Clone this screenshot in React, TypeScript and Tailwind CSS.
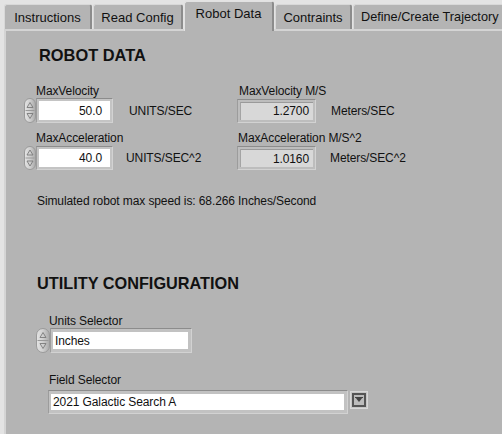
import React from "react";

function Tab({ w, label, active, last }: { w: number; label: string; active?: boolean; last?: boolean }) {
  if (active) {
    return (
      <div
        style={{ width: w }}
        className="relative z-10 mb-[-2px] h-[30px] shrink-0 rounded-t-[3px] border-t border-l border-r-2 border-t-[#e2e2e2] border-l-[#e2e2e2] border-r-[#8c8c8c] bg-[#b4b4b4] flex justify-center pt-[4px] text-[13px] leading-[15px]"
      >
        {label}
      </div>
    );
  }
  return (
    <div
      style={{ width: w }}
      className={`h-[25px] shrink-0 rounded-t-[3px] border-t border-l border-r-2 border-t-[#d8d8d8] border-l-[#d8d8d8] border-r-[#8c8c8c] bg-[#b4b4b4] flex items-center leading-[15px] whitespace-nowrap ${last ? "justify-start pl-[7px] text-[12.7px]" : "justify-center text-[13px]"}`}
    >
      {label}
    </div>
  );
}

function Spinner({ w = 13, h = 25 }: { w?: number; h?: number }) {
  const mid = h / 2;
  return (
    <svg width={w} height={h} viewBox={`0 0 ${w} ${h}`} className="shrink-0">
      <defs>
        <linearGradient id="spg" x1="0" x2="1" y1="0" y2="0">
          <stop offset="0" stopColor="#e4e4e4" />
          <stop offset="0.5" stopColor="#cfcfcf" />
          <stop offset="1" stopColor="#a9a9a9" />
        </linearGradient>
      </defs>
      <rect x="0.5" y="0.5" width={w - 1} height={h - 1} rx={(w - 1) / 2} fill="url(#spg)" stroke="#9a9a9a" />
      <line x1="1.5" y1={mid} x2={w - 1.5} y2={mid} stroke="#9a9a9a" />
      <path d={`M${w / 2} ${mid - 8} L${w / 2 + 3} ${mid - 3} L${w / 2 - 3} ${mid - 3} Z`} fill="none" stroke="#7a7a7a" strokeWidth="0.9" />
      <path d={`M${w / 2} ${mid + 8} L${w / 2 + 3} ${mid + 3} L${w / 2 - 3} ${mid + 3} Z`} fill="none" stroke="#7a7a7a" strokeWidth="0.9" />
    </svg>
  );
}

function NumControl({ value, w, h }: { value: string; w: number; h: number }) {
  return (
    <div
      style={{ width: w, height: h }}
      className="shrink-0 border border-t-[#8c8c8c] border-l-[#9c9c9c] border-r-[#d2d2d2] border-b-[#d2d2d2] bg-[#c4c4c4] p-[2px]"
    >
      <div className="h-full bg-white flex items-center justify-end pr-[8px] text-[12px] leading-[14px]">{value}</div>
    </div>
  );
}

function NumIndicator({ value, w, h }: { value: string; w: number; h: number }) {
  return (
    <div
      style={{ width: w, height: h }}
      className="shrink-0 border border-t-[#8c8c8c] border-l-[#9c9c9c] border-r-[#d2d2d2] border-b-[#d2d2d2] bg-[#bdbdbd] p-[2px]"
    >
      <div className="h-full bg-[#d8d8d8] border-t border-l border-t-[#9a9a9a] border-l-[#a4a4a4] flex items-center justify-end pr-[4px] text-[12px] leading-[14px]">
        {value}
      </div>
    </div>
  );
}

function TextBox({ value, w, h }: { value: string; w: number; h: number }) {
  return (
    <div
      style={{ width: w, height: h }}
      className="shrink-0 border border-t-[#8c8c8c] border-l-[#9c9c9c] border-r-[#d2d2d2] border-b-[#d2d2d2] bg-[#c2c2c2] pt-[3px] pl-[2px] pr-[3px] pb-[3px]"
    >
      <div className="h-full bg-white flex items-center pl-[2px] text-[12px] leading-[14px]">{value}</div>
    </div>
  );
}

function DropButton() {
  return (
    <div className="w-[18px] h-[18px] bg-[#c6c6c6] border border-[#d8d8d8] flex items-center justify-center">
      <div className="w-[14px] h-[14px] border-2 border-[#555555] bg-[#bcbcbc] flex items-center justify-center">
        <svg width="8" height="6" viewBox="0 0 8 6">
          <path d="M0 0 H8 L4 5 Z" fill="#444444" />
          <line x1="0" y1="0.5" x2="8" y2="0.5" stroke="#444444" />
        </svg>
      </div>
    </div>
  );
}

export default function App() {
  return (
    <div className="w-[502px] h-[434px] overflow-hidden bg-[#e3e3e3] flex flex-col font-['Liberation_Sans',Arial,sans-serif] text-[#111111]">
      <div className="flex items-end h-[29px] pl-[4px] gap-[1px] shrink-0">
        <Tab w={88} label="Instructions" />
        <Tab w={90} label="Read Config" />
        <Tab w={90} label="Robot Data" active />
        <Tab w={77} label="Contraints" />
        <Tab w={170} label="Define/Create Trajectory" last />
      </div>
      <div className="flex-1 ml-[4px] bg-[#b4b4b4] border-t-2 border-l-2 border-t-[#d4d4d4] border-l-[#d4d4d4] flex flex-col text-[12px] leading-[14px] tracking-[-0.1px]">
        <div className="ml-[33px] mt-[14px] text-[16.4px] leading-[20px] font-bold tracking-normal">ROBOT DATA</div>

        <div className="ml-[18px] mt-[19px] grid grid-cols-[213px_auto]">
          <div className="pl-[12px]">MaxVelocity</div>
          <div className="pl-[2px]">MaxVelocity M/S</div>

          <div className="flex items-center">
            <Spinner w={12} h={25} />
            <NumControl value="50.0" w={77} h={25} />
            <span className="ml-[16px]">UNITS/SEC</span>
          </div>
          <div className="flex items-center">
            <NumIndicator value="1.2700" w={79} h={24} />
            <span className="ml-[15px]">Meters/SEC</span>
          </div>

          <div className="pl-[12px] mt-[8px] mb-[1px]">MaxAcceleration</div>
          <div className="pl-[1px] mt-[8px] mb-[1px]">MaxAcceleration M/S^2</div>

          <div className="flex items-center">
            <Spinner w={12} h={24} />
            <NumControl value="40.0" w={77} h={24} />
            <span className="ml-[13px]">UNITS/SEC^2</span>
          </div>
          <div className="flex items-center">
            <NumIndicator value="1.0160" w={79} h={24} />
            <span className="ml-[14px]">Meters/SEC^2</span>
          </div>
        </div>

        <div className="ml-[31px] mt-[24px]">Simulated robot max speed is: 68.266 Inches/Second</div>

        <div className="ml-[31px] mt-[65px] text-[16.3px] leading-[20px] font-bold tracking-normal">UTILITY CONFIGURATION</div>

        <div className="ml-[43px] mt-[22px] leading-[13px]">Units Selector</div>
        <div className="ml-[30px] flex items-center">
          <Spinner w={14} h={25} />
          <TextBox value="Inches" w={142} h={25} />
        </div>

        <div className="ml-[43px] mt-[20px]">Field Selector</div>
        <div className="ml-[42px] mt-[3px] flex items-start gap-[2px]">
          <TextBox value="2021 Galactic Search A" w={300} h={24} />
          <div className="mt-[1px]">
            <DropButton />
          </div>
        </div>
      </div>
    </div>
  );
}
